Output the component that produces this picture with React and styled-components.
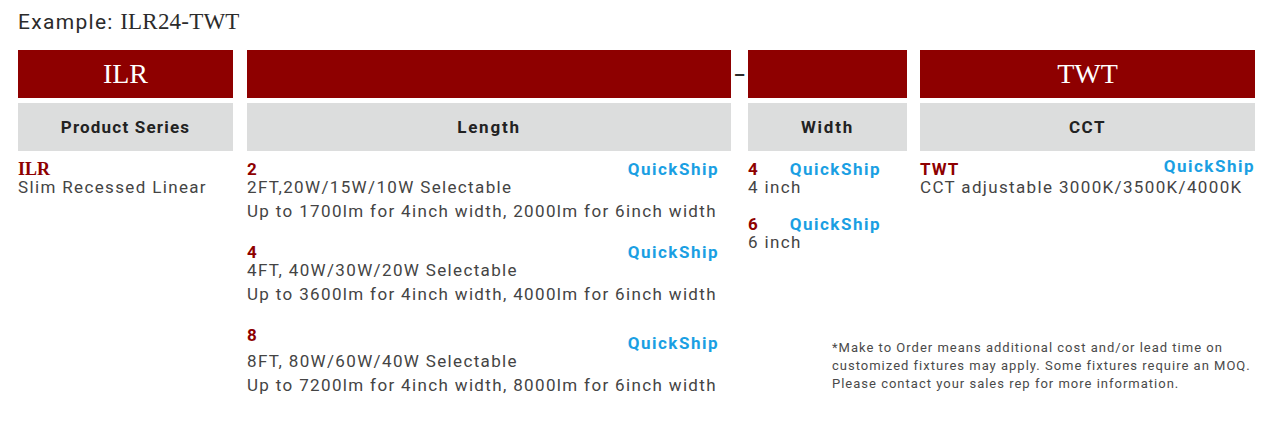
import React from "react";
import styled, { createGlobalStyle } from "styled-components";

const Global = createGlobalStyle`
  html, body { margin: 0; padding: 0; background: #fff; }
  body { font-family: Roboto, "Liberation Sans", sans-serif; color: #3d3d3d; }
`;

const RED = "#8e0000";
const BLUE = "#1a9fe3";

const Page = styled.div`
  padding: 8px 0 0 18px;
  width: 1255px;
`;

const Title = styled.div`
  font-size: 21px;
  line-height: 28px;
  color: #2b2b2b;
  letter-spacing: 1.3px;
  margin-bottom: 14px;
`;

const SerifPart = styled.span`
  font-family: "Liberation Serif", "Times New Roman", serif;
  font-size: 23px;
  letter-spacing: 0.2px;
`;

const Chart = styled.div`
  display: grid;
  grid-template-columns: 215px 14px 484px 17px 159px 13px 335px;
  grid-template-rows: 48px 48px auto;
  row-gap: 5px;
`;

const RedBar = styled.div`
  grid-column: ${(p) => p.$col};
  grid-row: 1;
  background: ${RED};
  color: #fff;
  font-family: "Liberation Serif", "Times New Roman", serif;
  font-size: 28px;
  display: flex;
  align-items: center;
  justify-content: center;
`;

const Dash = styled.div`
  grid-column: 4;
  grid-row: 1;
  display: flex;
  align-items: center;
  justify-content: center;
  font-size: 18px;
  font-weight: 700;
  color: #2a2a2a;
  padding-top: 1px;
`;

const GreyBar = styled.div`
  grid-column: ${(p) => p.$col};
  grid-row: 2;
  background: #dcdddd;
  color: #222;
  font-size: 17px;
  font-weight: 700;
  letter-spacing: ${(p) => p.$spacing || "1.2px"};
  display: flex;
  align-items: center;
  justify-content: center;
`;

const Body = styled.div`
  grid-column: ${(p) => p.$col};
  grid-row: 3;
  padding-top: 4px;
  padding-right: ${(p) => p.$padRight || 0}px;
  display: flex;
  flex-direction: column;
`;

const RightBody = styled(Body)`
  justify-content: space-between;
`;

const RightCols = styled.div`
  display: grid;
  grid-template-columns: 159px 13px 335px;
`;

const Stack = styled.div`
  grid-column: ${(p) => p.$col};
  display: flex;
  flex-direction: column;
  gap: ${(p) => p.$gap || "20px"};
`;

const Item = styled.div`
  display: flex;
  flex-direction: column;
`;

const Head = styled.div`
  display: flex;
  align-items: flex-start;
  justify-content: ${(p) => (p.$spread ? "space-between" : "flex-start")};
  gap: ${(p) => p.$gap || "0"};
  line-height: 18px;
`;

const Code = styled.span`
  color: ${RED};
  font-size: 17px;
  font-weight: 700;
  letter-spacing: 1px;
`;

const SerifCode = styled.span`
  color: ${RED};
  font-family: "Liberation Serif", "Times New Roman", serif;
  font-size: 18px;
  font-weight: 700;
`;

const Quick = styled.span`
  color: ${BLUE};
  font-size: 17px;
  font-weight: 700;
  letter-spacing: 1.5px;
  margin-top: ${(p) => p.$drop || 0}px;
`;

const Line = styled.div`
  font-size: 17px;
  line-height: 24px;
  letter-spacing: 1.35px;
  color: #444;
  white-space: nowrap;
  ${Head} + & { margin-top: -3px; }
`;

const Note = styled.div`
  padding-left: 84px;
  font-size: 13px;
  line-height: 18px;
  letter-spacing: 1px;
  color: #4a4a4a;
  padding-bottom: 4px;
  white-space: nowrap;
`;

const lengths = [
  { code: "2", a: "2FT,20W/15W/10W Selectable", b: "Up to 1700lm for 4inch width, 2000lm for 6inch width" },
  { code: "4", a: "4FT, 40W/30W/20W Selectable", b: "Up to 3600lm for 4inch width, 4000lm for 6inch width" },
  { code: "8", a: "8FT, 80W/60W/40W Selectable", b: "Up to 7200lm for 4inch width, 8000lm for 6inch width", drop: 8 },
];

export default function App() {
  return (
    <>
      <Global />
      <Page>
        <Title>
          Example: <SerifPart>ILR24-TWT</SerifPart>
        </Title>
        <Chart>
          <RedBar $col={1}>ILR</RedBar>
          <RedBar $col={3} />
          <Dash>–</Dash>
          <RedBar $col={5} />
          <RedBar $col={7}>TWT</RedBar>

          <GreyBar $col={1}>Product Series</GreyBar>
          <GreyBar $col={3} $spacing="1.8px">Length</GreyBar>
          <GreyBar $col={5} $spacing="1.8px">Width</GreyBar>
          <GreyBar $col={7} $spacing="1.5px">CCT</GreyBar>

          <Body $col={1}>
            <Item>
              <Head><SerifCode>ILR</SerifCode></Head>
              <Line>Slim Recessed Linear</Line>
            </Item>
          </Body>

          <Body $col={3} $padRight={12}>
            <Stack $gap="20px">
              {lengths.map((l) => (
                <Item key={l.code}>
                  <Head $spread>
                    <Code>{l.code}</Code>
                    <Quick $drop={l.drop}>QuickShip</Quick>
                  </Head>
                  <Line>{l.a}</Line>
                  <Line>{l.b}</Line>
                </Item>
              ))}
            </Stack>
          </Body>

          <RightBody $col="5 / 8">
            <RightCols>
              <Stack $col={1} $gap="16px">
                <Item>
                  <Head $gap="31px"><Code>4</Code><Quick>QuickShip</Quick></Head>
                  <Line>4 inch</Line>
                </Item>
                <Item>
                  <Head $gap="31px"><Code>6</Code><Quick>QuickShip</Quick></Head>
                  <Line>6 inch</Line>
                </Item>
              </Stack>
              <Stack $col={3}>
                <Item>
                  <Head $spread><Code>TWT</Code><Quick $drop={-3}>QuickShip</Quick></Head>
                  <Line>CCT adjustable 3000K/3500K/4000K</Line>
                </Item>
              </Stack>
            </RightCols>
            <Note>
              *Make to Order means additional cost and/or lead time on<br />
              customized fixtures may apply. Some fixtures require an MOQ.<br />
              Please contact your sales rep for more information.
            </Note>
          </RightBody>
        </Chart>
      </Page>
    </>
  );
}
